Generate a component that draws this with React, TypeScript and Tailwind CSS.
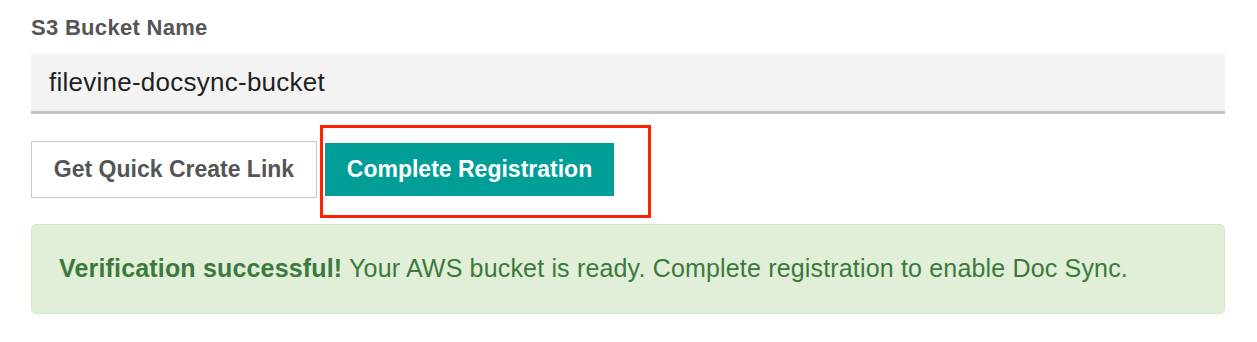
import React from "react";

export default function App() {
  return (
    <div className="min-h-screen bg-white px-[31px] pt-[15px] font-['Liberation_Sans',Arial,sans-serif]">
      <label className="block text-[22px] font-bold leading-[26px] tracking-[0.3px] text-[#555555]">S3 Bucket Name</label>
      <div className="mt-[13px] flex h-[60px] w-[1194px] items-center border-b-[3px] border-[#c4c4c4] bg-[#f3f3f3] px-[18px]">
        <span className="text-[26px] tracking-[0.25px] text-[#1f1f1f]">filevine-docsync-bucket</span>
      </div>
      <div className="mt-[27px] flex items-center">
        <button className="flex h-[57px] w-[286px] items-center justify-center border border-[#c8c8c8] bg-white text-[23px] font-bold text-[#555555]">
          Get Quick Create Link
        </button>
        <div className="relative ml-[8px]">
          <button className="flex h-[53px] w-[289px] items-center justify-center bg-[#009e96] text-[23px] font-bold text-white">
            Complete Registration
          </button>
          <div className="pointer-events-none absolute left-[-5px] top-[-18px] h-[93px] w-[331px] border-[3px] border-[#ff2200]" />
        </div>
      </div>
      <div className="mt-[26px] flex h-[90px] w-[1194px] items-center rounded-[5px] border border-[#d3e8c8] bg-[#e1efd8] px-[27px] text-[25px] tracking-[0.17px] text-[#3b7a3c]">
        <span>
          <b>Verification successful!</b> Your AWS bucket is ready. Complete registration to enable Doc Sync.
        </span>
      </div>
    </div>
  );
}
